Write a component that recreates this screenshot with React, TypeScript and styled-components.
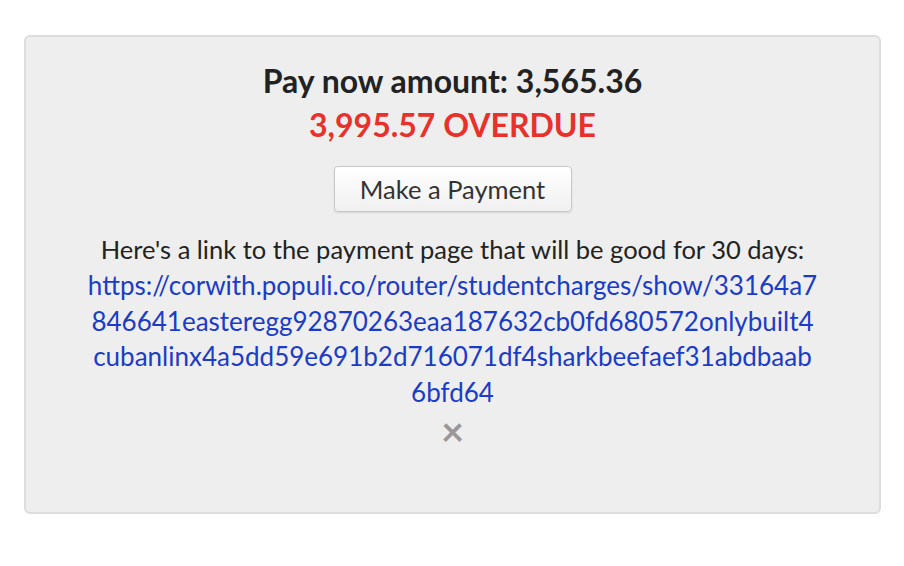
import React from "react";
import styled, { createGlobalStyle } from "styled-components";

const Global = createGlobalStyle`
  html, body { margin: 0; padding: 0; background: #fff; }
  body { font-family: Lato, "Open Sans", sans-serif; }
`;

const Page = styled.div`
  padding: 35px 24px 0 24px;
  width: 904px;
  box-sizing: border-box;
`;

const Card = styled.div`
  width: 857px;
  height: 479px;
  box-sizing: border-box;
  background: #eeeeee;
  border: 2px solid #dddddd;
  border-radius: 6px;
  display: flex;
  flex-direction: column;
  align-items: center;
  padding: 22px 40px 0;
  text-align: center;
`;

const Amount = styled.div`
  font-size: 32px;
  font-weight: 700;
  color: #222;
  line-height: 44px;
`;

const Overdue = styled.div`
  font-size: 32px;
  font-weight: 700;
  color: #e8312a;
  line-height: 44px;
`;

const PayButton = styled.button`
  margin-top: 19px;
  width: 238px;
  height: 46px;
  padding: 0;
  font-family: Lato, sans-serif;
  font-size: 25.5px;
  color: #333;
  background: linear-gradient(#ffffff, #f0f0f0);
  border: 1px solid #c8c8c8;
  border-radius: 4px;
  box-shadow: 0 1px 2px rgba(0,0,0,0.1);
`;

const Note = styled.div`
  margin-top: 20px;
  font-size: 25.5px;
  line-height: 35.75px;
  color: #222;
  width: 770px;
`;

const Link = styled.a`
  color: #1a3cc8;
  font-size: 26px;
  text-decoration: none;
  word-break: break-all;
`;

const Close = styled.div`
  color: #999;
  font-size: 40px;
  line-height: 40px;
  font-weight: 700;
`;

const linkLines = [
  "https://corwith.populi.co/router/studentcharges/show/33164a7",
  "846641easteregg92870263eaa187632cb0fd680572onlybuilt4",
  "cubanlinx4a5dd59e691b2d716071df4sharkbeefaef31abdbaab",
  "6bfd64",
];

export default function App() {
  return (
    <>
      <Global />
      <Page>
        <Card>
          <Amount>Pay now amount: 3,565.36</Amount>
          <Overdue>3,995.57 OVERDUE</Overdue>
          <PayButton>Make a Payment</PayButton>
          <Note>
            Here's a link to the payment page that will be good for 30 days:
            <br />
            <Link href="#">
              {linkLines.map((l, i) => (
                <React.Fragment key={i}>
                  {l}
                  {i < linkLines.length - 1 && <br />}
                </React.Fragment>
              ))}
            </Link>
          </Note>
          <Close>×</Close>
        </Card>
      </Page>
    </>
  );
}
